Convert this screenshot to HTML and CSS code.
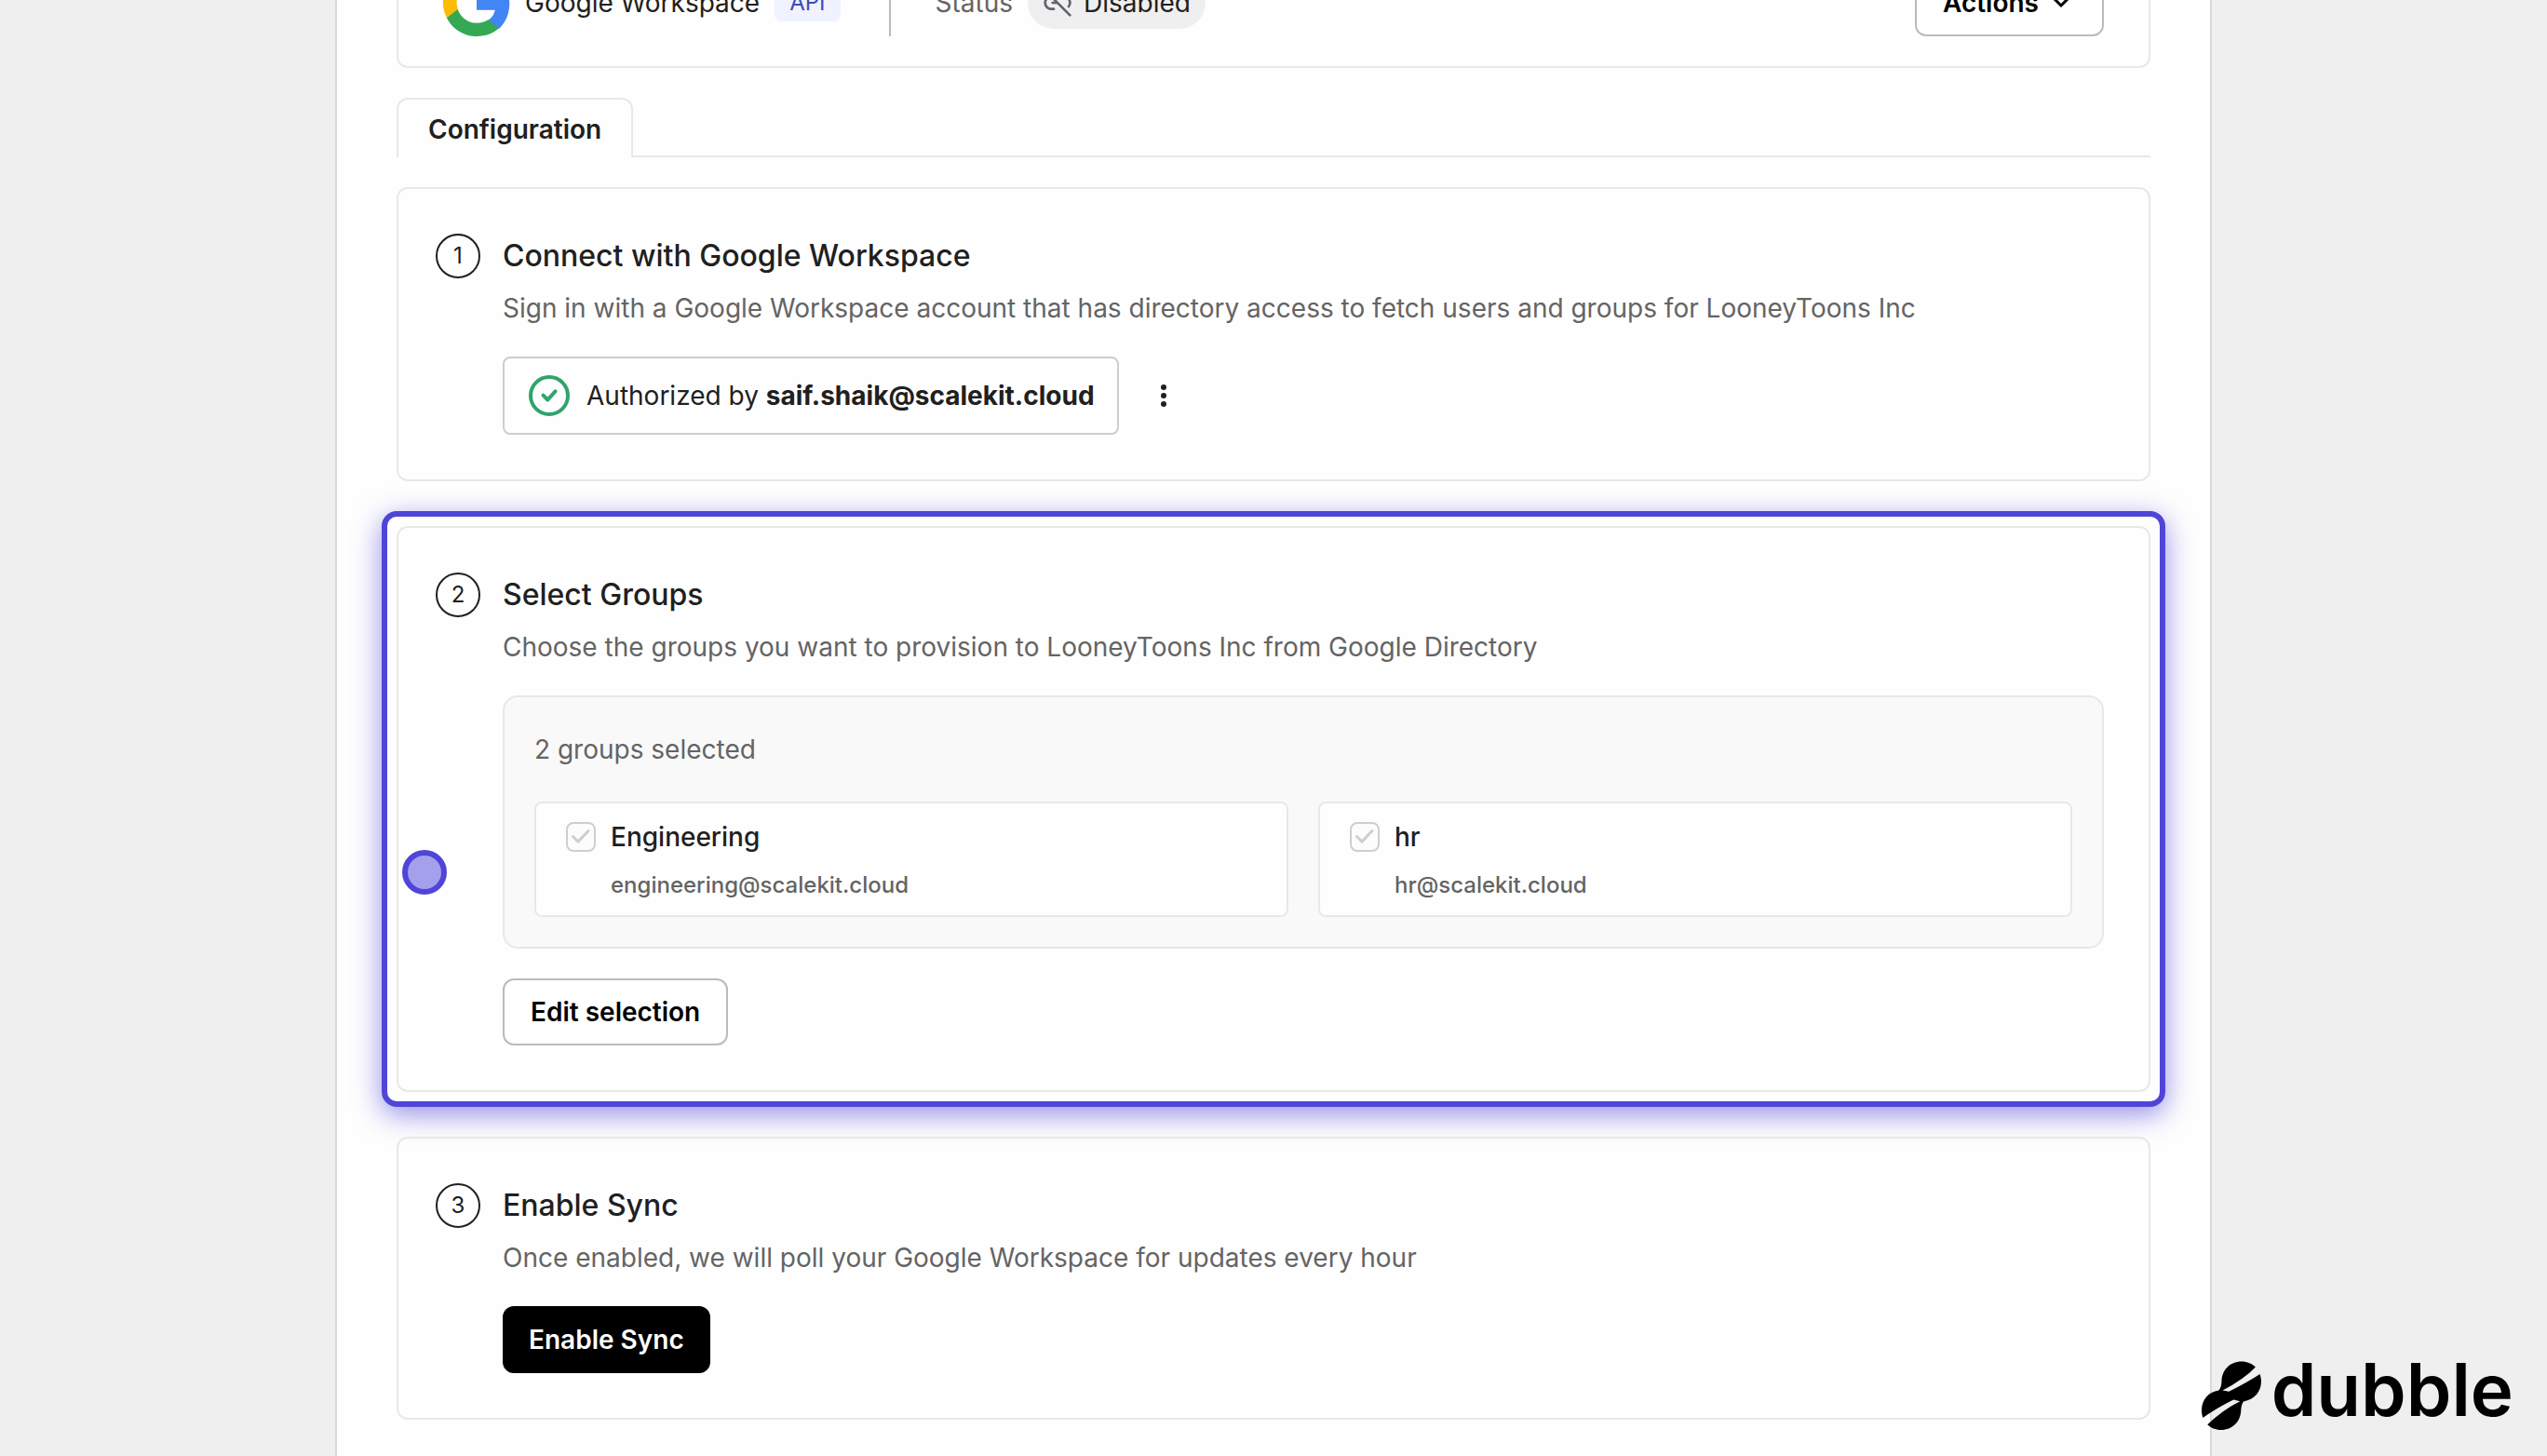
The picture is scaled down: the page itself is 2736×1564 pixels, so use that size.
FILE: index.html
```html
<!DOCTYPE html>
<html lang="en">
<head>
<meta charset="utf-8">
<title>Google Workspace directory</title>
<link rel="stylesheet" href="styles.css">
</head>
<body>
<main class="page">
  <header class="card connection">
    <svg class="google" viewBox="0 0 48 48" aria-hidden="true">
      <path fill="#4285F4" d="M47.500 24.500c0-1.600-.2-3.200-.4-4.600H24v9.300h13.200c-.6 3-2.300 5.600-4.900 7.300v6h7.800c4.700-4.300 7.400-10.600 7.400-18z"/>
      <path fill="#34A853" d="M24 48c6.500 0 11.900-2.100 15.900-5.800l-7.700-6c-2.200 1.500-4.900 2.300-8.200 2.300-6.300 0-11.600-4.200-13.500-9.900H2.600v6.200C6.500 42.600 14.600 48 24 48z"/>
      <path fill="#FBBC05" d="M10.500 28.600a14.500 14.500 0 0 1 0-9.200v-6.200H2.600a24 24 0 0 0 0 21.600z"/>
      <path fill="#EA4335" d="M24 9.500c3.500 0 6.700 1.200 9.200 3.600l6.900-6.900C35.900 2.400 30.500 0 24 0 14.600 0 6.500 5.400 2.600 13.200l7.900 6.200C12.400 13.700 17.700 9.500 24 9.500z"/>
    </svg>
    <span class="name">Google Workspace</span>
    <span class="badge">API</span>
    <span class="divider"></span>
    <span class="muted">Status</span>
    <span class="pill">
      <svg class="unlink" viewBox="0 0 24 24" aria-hidden="true"><path d="M9 17H7A5 5 0 0 1 7 7M15 7h2a5 5 0 0 1 4 8M8 12h4M2 2l20 20"/></svg>
      Disabled
    </span>
    <button class="button actions" type="button">Actions
      <svg class="chevron" viewBox="0 0 24 24" aria-hidden="true"><path d="M4 7l8 8 8-8"/></svg>
    </button>
  </header>

  <nav class="tabs"><a class="tab" href="#configuration">Configuration</a></nav>

  <div class="steps" id="configuration">
    <section class="card step">
      <span class="number">1</span>
      <div class="body">
        <h2 class="title">Connect with Google Workspace</h2>
        <p class="text">Sign in with a Google Workspace account that has directory access to fetch users and groups for LooneyToons Inc</p>
        <div class="row">
          <div class="account">
            <svg class="ok" viewBox="0 0 44 44" aria-hidden="true"><circle cx="22" cy="22" r="20"/><path d="M15.500 21.700l4.800 4.800 8.200-9.200"/></svg>
            <span>Authorized by <strong>saif.shaik@scalekit.cloud</strong></span>
          </div>
          <button class="more" type="button" aria-label="More options"><svg viewBox="0 0 32 32"><circle cx="16" cy="7" r="3"/><circle cx="16" cy="16" r="3"/><circle cx="16" cy="25" r="3"/></svg></button>
        </div>
      </div>
    </section>

    <section class="card step highlighted">
      <span class="number">2</span>
      <div class="body">
        <h2 class="title">Select Groups</h2>
        <p class="text">Choose the groups you want to provision to LooneyToons Inc from Google Directory</p>
        <div class="groups">
          <p class="count">2 groups selected</p>
          <div class="grid">
            <div class="group">
              <input class="check" type="checkbox" id="engineering" checked disabled>
              <label class="label" for="engineering">Engineering<span class="email">engineering@scalekit.cloud</span></label>
            </div>
            <div class="group">
              <input class="check" type="checkbox" id="hr" checked disabled>
              <label class="label" for="hr">hr<span class="email">hr@scalekit.cloud</span></label>
            </div>
          </div>
        </div>
        <button class="button" type="button">Edit selection</button>
      </div>
      <span class="pointer"></span>
    </section>

    <section class="card step">
      <span class="number">3</span>
      <div class="body">
        <h2 class="title">Enable Sync</h2>
        <p class="text">Once enabled, we will poll your Google Workspace for updates every hour</p>
        <button class="button primary" type="button">Enable Sync</button>
      </div>
    </section>
  </div>
</main>

<div class="brand">
  <svg class="mark" viewBox="0 0 66 76" aria-hidden="true">
    <mask id="slits">
      <path fill="#fff" d="M0 0h66v76H0z"/>
      <path d="M60 6.500Q46 21 23.500 32.500L30.300 33.800Q50 24 66 13.500z"/>
      <path d="M0 63.500Q18 51 35.300 42.600L42.300 44.200Q23 53.500 6 70.500z"/>
    </mask>
    <path mask="url(#slits)" d="M44 1.500C31 1.500 23 11 22.500 22C22.300 27 21.500 30 19.500 32.500C8 34 1 43 1 54C1 66 10 75 22 75C34 75 43 66 43.300 54C43.500 50 44.200 47 46 44.500C58 42 65 34 65 22.500C65 11 56 1.500 44 1.500z"/>
  </svg>
  <span>dubble</span>
</div>
</body>
</html>
```
FILE: styles.css
```css
* { box-sizing: border-box; }

body {
  margin: 0;
  height: 100vh;
  overflow: hidden;
  background: #efefef;
  color: #202020;
  font-family: Inter, "Liberation Sans", sans-serif;
  font-size: 28px;
  line-height: 40px;
}

h2, p { margin: 0; }

/* The page is scrolled part of the way past its header card. */
.page {
  max-width: 2016px;
  min-height: calc(100vh + 67px);
  margin: -67px auto 0;
  padding: 0 64px;
  border: solid #d9d9d9;
  border-width: 0 2px;
  background: #fefefe;
}

.card {
  border: 2px solid #e8e8e8;
  border-radius: 12px;
}

.connection {
  display: flex;
  align-items: center;
  gap: 16px;
  padding: 32px 48px;
}
.google { width: 72px; height: 72px; }
.badge {
  padding: 0 16px;
  border-radius: 8px;
  background: #f0f2ff;
  color: #3a4db9;
  font-size: 24px;
}
.divider {
  width: 2px;
  height: 72px;
  margin: 0 32px 0 36px;
  background: #bbb;
}
.muted { color: #646464; }
.pill {
  display: flex;
  align-items: center;
  gap: 12px;
  height: 56px;
  padding: 0 16px;
  border-radius: 28px;
  background: #efefef;
}
.unlink { width: 32px; height: 32px; fill: none; stroke: #60646c; stroke-width: 2; stroke-linecap: round; }

.button {
  display: inline-flex;
  align-items: center;
  gap: 12px;
  height: 72px;
  padding: 0 28px;
  border: 2px solid #bbb;
  border-radius: 12px;
  background: #fff;
  color: #000;
  font: inherit;
  font-weight: 600;
}
.button.primary { border-color: #000; background: #000; color: #fff; padding: 0 26px; }
.button.actions { margin-left: auto; padding-right: 32px; }
.chevron { width: 24px; height: 24px; fill: none; stroke: #000; stroke-width: 3; }

.tabs {
  display: flex;
  margin: 32px 0;
}
.tabs::after { content: ""; flex: 1; border-bottom: 2px solid #e8e8e8; }
.tab {
  height: 64px;
  padding: 12px 32px;
  border: 2px solid #e8e8e8;
  border-bottom: 0;
  border-radius: 12px 12px 0 0;
  color: inherit;
  font-weight: 600;
  text-decoration: none;
}

.steps { display: flex; flex-direction: column; gap: 48px; }
.step {
  position: relative;
  display: flex;
  align-items: flex-start;
  gap: 24px;
  padding: 48px 48px 48px 40px;
}
.number {
  flex: none;
  width: 48px;
  height: 48px;
  border: 2px solid #202020;
  border-radius: 50%;
  font-size: 24px;
  line-height: 44px;
  text-align: center;
}
.body { flex: 1; min-width: 0; }
.title { font-size: 32px; font-weight: 500; line-height: 48px; }
.text { margin: 12px 0 32px; color: #646464; }

.row { display: flex; align-items: center; gap: 32px; }
.account {
  display: flex;
  align-items: center;
  gap: 18px;
  height: 84px;
  padding: 0 24px 0 26px;
  border: 2px solid #cdcdcd;
  border-radius: 8px;
}
.account strong { font-weight: 700; }
.ok { width: 44px; height: 44px; fill: none; stroke: #30a46c; stroke-width: 4; stroke-linecap: round; stroke-linejoin: round; }
.more { display: flex; padding: 0; border: 0; background: none; }
.more svg { width: 32px; height: 32px; fill: #202020; }

.groups {
  margin-bottom: 32px;
  padding: 32px;
  border: 2px solid #e8e8e8;
  border-radius: 16px;
  background: #f9f9f9;
}
.count { margin: 4px 0 36px; color: #646464; }
.grid { display: grid; grid-template-columns: 1fr 1fr; gap: 32px; }
.group {
  display: flex;
  gap: 16px;
  padding: 16px 32px;
  border: 2px solid #e8e8e8;
  border-radius: 8px;
  background: #fefefe;
}
.check {
  appearance: none;
  flex: none;
  width: 32px;
  height: 32px;
  margin: 4px 0;
  border: 2px solid #cecece;
  border-radius: 8px;
  background: #fcfcfc url("data:image/svg+xml,%3Csvg xmlns='http://www.w3.org/2000/svg' viewBox='0 0 28 28'%3E%3Cpath d='M5.500 13.500l5.500 5.500L22 7.500' fill='none' stroke='%23cecece' stroke-width='3' stroke-linecap='round'/%3E%3C/svg%3E") center / 28px;
}
.label { font-weight: 500; }
.email { display: block; margin-top: 16px; color: #646464; font-size: 24px; line-height: 32px; }

/* Guide overlay */
.highlighted::before {
  content: "";
  position: absolute;
  inset: -18px;
  border: 6px solid #4f45d8;
  border-radius: 16px;
  box-shadow: 0 8px 30px rgba(79, 69, 216, .6);
  pointer-events: none;
}
.pointer {
  position: absolute;
  top: 346px;
  left: 4px;
  width: 48px;
  height: 48px;
  border: 6px solid #4f45d8;
  border-radius: 50%;
  background: #a5a0ec;
}

.brand {
  position: fixed;
  right: 36px;
  bottom: 27px;
  display: flex;
  align-items: flex-start;
  gap: 10px;
  color: #000;
  font-size: 78px;
  font-weight: 600;
  line-height: 64px;
}
.mark { width: 66px; height: 76px; }
```
